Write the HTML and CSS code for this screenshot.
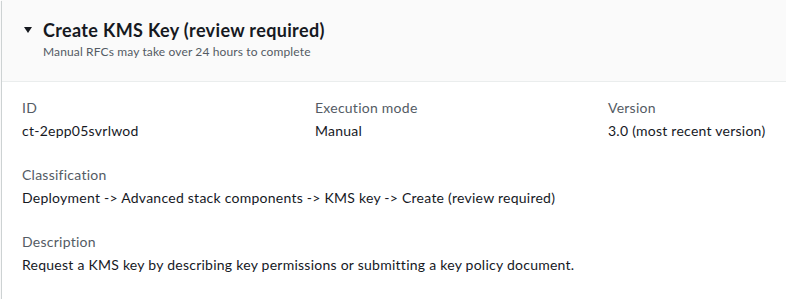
FILE: index.html
```html
<!DOCTYPE html>
<html lang="en">
<head>
  <meta charset="UTF-8">
  <title>Create KMS Key</title>
  <link rel="stylesheet" href="styles.css">
</head>
<body>
  <div class="card">
    <div class="card-header">
      <div class="title-row">
        <svg class="caret" width="10" height="8" viewBox="0 0 10 8"><path d="M1 1h8L5 7z" fill="#16191f"/></svg>
        <h2>Create KMS Key (review required)</h2>
      </div>
      <div class="subtitle">Manual RFCs may take over 24 hours to complete</div>
    </div>
    <div class="card-body">
      <div class="columns">
        <div class="field">
          <div class="label">ID</div>
          <div class="value">ct-2epp05svrlwod</div>
        </div>
        <div class="field">
          <div class="label">Execution mode</div>
          <div class="value">Manual</div>
        </div>
        <div class="field">
          <div class="label">Version</div>
          <div class="value">3.0 (most recent version)</div>
        </div>
      </div>
      <div class="field">
        <div class="label">Classification</div>
        <div class="value">Deployment -&gt; Advanced stack components -&gt; KMS key -&gt; Create (review required)</div>
      </div>
      <div class="field">
        <div class="label">Description</div>
        <div class="value">Request a KMS key by describing key permissions or submitting a key policy document.</div>
      </div>
    </div>
  </div>
</body>
</html>
```
FILE: styles.css
```css
body {
  margin: 0;
  padding: 0;
  background: #fff;
  font-family: Lato, "Open Sans", sans-serif;
  color: #16191f;
  overflow: hidden;
}
.card {
  margin: 0 0 0 2px;
  background: #fff;
  box-shadow: 0 1px 1px 0 rgba(0, 28, 36, 0.3), -1px 1px 1px 0 rgba(0, 28, 36, 0.15);
}
.card-header {
  background: #fafafa;
  border-bottom: 1px solid #eaeded;
  padding: 19px 20px 21px 20px;
}
.title-row {
  display: flex;
  align-items: center;
  gap: 10px;
}
.caret {
  margin-left: 1px;
}
h2 {
  margin: 0;
  font-size: 18px;
  line-height: 22px;
  font-weight: bold;
  letter-spacing: 0.35px;
}
.subtitle {
  margin-top: 3px;
  margin-left: 21px;
  font-size: 12px;
  line-height: 16px;
  letter-spacing: 0.13px;
  color: #545b64;
}
.card-body {
  padding: 15px 20px 25px 20px;
  display: flex;
  flex-direction: column;
  gap: 22px;
}
.columns {
  display: grid;
  grid-template-columns: 273px 273px 1fr;
  gap: 20px;
}
.label {
  font-size: 14px;
  line-height: 22px;
  letter-spacing: 0.25px;
  color: #545b64;
  margin-bottom: 1px;
}
.value {
  font-size: 14px;
  line-height: 22px;
  letter-spacing: 0.25px;
}
```
